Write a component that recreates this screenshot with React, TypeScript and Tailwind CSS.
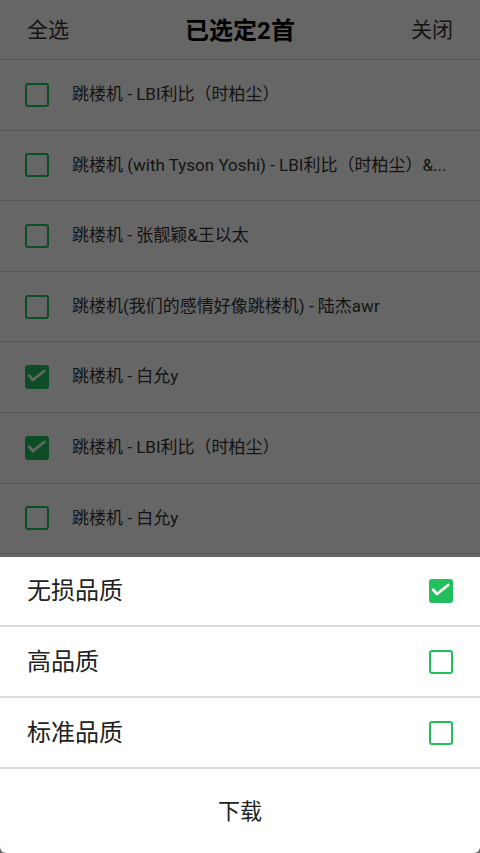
import { useState } from 'react';

const songs = [
  { title: '跳楼机 - LBI利比（时柏尘）', checked: false },
  { title: '跳楼机 (with Tyson Yoshi) - LBI利比（时柏尘）&...', checked: false },
  { title: '跳楼机 - 张靓颖&王以太', checked: false },
  { title: '跳楼机(我们的感情好像跳楼机) - 陆杰awr', checked: false },
  { title: '跳楼机 - 白允y', checked: true },
  { title: '跳楼机 - LBI利比（时柏尘）', checked: true },
  { title: '跳楼机 - 白允y', checked: false },
];

const qualities = ['无损品质', '高品质', '标准品质'];

function CheckBox({ checked }: { checked: boolean }) {
  if (checked) {
    return (
      <div className="size-6 rounded-[3px] bg-[#21c05c] shrink-0">
        <svg viewBox="0 0 24 24" className="size-6" fill="none" stroke="white" strokeWidth={2.8} strokeLinecap="round" strokeLinejoin="round">
          <path d="M4.2 10.8l3.8 4.2 11.2-9" />
        </svg>
      </div>
    );
  }
  return <div className="size-6 rounded-[3px] border-2 border-[#21c05c] shrink-0" />;
}

export default function App() {
  const [quality, setQuality] = useState(0);

  return (
    <div className="relative w-[480px] h-[853px] overflow-hidden bg-white" style={{ fontFamily: 'Roboto, "Noto Sans CJK SC", sans-serif' }}>
      {/* header */}
      <div className="h-[60px] border-b border-[#d6d6d6] flex items-center justify-between px-[27px] pt-[2px]">
        <span className="text-[21px] text-[#333]">全选</span>
        <span className="text-[24px] font-bold text-black">已选定2首</span>
        <span className="text-[21px] text-[#333]">关闭</span>
      </div>

      {/* song list */}
      <div className="flex flex-col">
        {songs.map((s, i) => (
          <div key={i} className="h-[70.6px] border-b border-[#d6d6d6] flex items-center pl-[25px] pr-[28px] gap-[23px]">
            <CheckBox checked={s.checked} />
            <span className="text-[17px] text-[#333] whitespace-nowrap">{s.title}</span>
          </div>
        ))}
      </div>

      {/* dim overlay */}
      <div className="absolute inset-0 bg-black/60" />

      {/* bottom sheet */}
      <div className="absolute left-0 right-0 bottom-0 bg-white rounded-b-[6px]">
        {qualities.map((q, i) => (
          <div
            key={q}
            onClick={() => setQuality(i)}
            className={`flex items-center justify-between px-[27px] border-b-2 border-[#dcdcdc] ${i === 0 ? 'h-[70px]' : 'h-[71px]'}`}
          >
            <span className="text-[24px] text-[#222]">{q}</span>
            <CheckBox checked={quality === i} />
          </div>
        ))}
        <div className="h-[84px] flex items-center justify-center">
          <span className="text-[22px] text-[#222]">下载</span>
        </div>
      </div>
    </div>
  );
}
